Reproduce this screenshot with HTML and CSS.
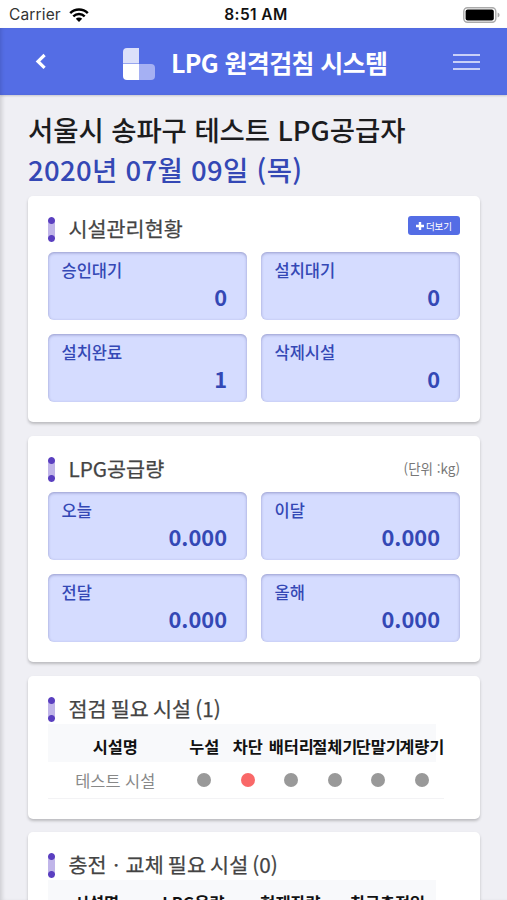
FILE: index.html
```html
<!DOCTYPE html>
<html lang="ko">
<head>
  <meta charset="UTF-8">
  <meta name="viewport" content="width=device-width, initial-scale=1.0">
  <title>LPG 원격검침 시스템</title>
  <link rel="stylesheet" href="styles.css">
</head>
<body>

  <div class="status-bar">
    <div class="carrier">
      <span>Carrier</span>
      <svg width="20" height="14" viewBox="0 0 20 14">
        <path d="M1.2 5.2a12.6 12.6 0 0 1 17.6 0" fill="none" stroke="#000" stroke-width="2.5"/>
        <path d="M4.3 8.3a8.2 8.2 0 0 1 11.4 0" fill="none" stroke="#000" stroke-width="2.4"/>
        <path d="M6.8 10.7a4.6 4.6 0 0 1 6.4 0L10 13.9z" fill="#000"/>
      </svg>
    </div>
    <div class="time">8:51 AM</div>
    <svg class="battery" width="37" height="16" viewBox="0 0 37 16">
      <rect x="0.8" y="0.8" width="32" height="14.4" rx="3.6" fill="none" stroke="#aaa" stroke-width="1.4"/>
      <rect x="2.6" y="2.6" width="28.2" height="10.8" rx="2" fill="#000"/>
      <path d="M34.6 5.5q2 .7 2 2.5t-2 2.5z" fill="#aaa"/>
    </svg>
  </div>

  <header class="header">
    <svg class="back" width="12" height="17" viewBox="0 0 12 17">
      <path d="M9.6 2L3 8.4l6.6 6.4" fill="none" stroke="#fff" stroke-width="3.2"/>
    </svg>
    <div class="brand">
      <svg width="32" height="32" viewBox="0 0 32 32">
        <path d="M4 0h12v15.5H0V4a4 4 0 0 1 4-4z" fill="#dce0fa"/>
        <path d="M0 16h16v16H4a4 4 0 0 1-4-4z" fill="#fff"/>
        <path d="M16 16h12a4 4 0 0 1 4 4v8a4 4 0 0 1-4 4H16z" fill="#a5b0f3"/>
      </svg>
      <h1>LPG 원격검침 시스템</h1>
    </div>
    <div class="menu"><span></span><span></span><span></span></div>
  </header>

  <main class="content">
    <h2 class="company">서울시 송파구 테스트 LPG공급자</h2>
    <p class="date">2020년 07월 09일 (목)</p>

    <section class="card">
      <div class="card-head">
        <i class="marker"></i>
        <h3>시설관리현황</h3>
        <a class="more">
          <svg width="8" height="8" viewBox="0 0 8 8"><path d="M4 0v8M0 4h8" stroke="#fff" stroke-width="2.4"/></svg>
          <span>더보기</span>
        </a>
      </div>
      <div class="boxes">
        <div class="box"><span>승인대기</span><strong>0</strong></div>
        <div class="box"><span>설치대기</span><strong>0</strong></div>
        <div class="box"><span>설치완료</span><strong>1</strong></div>
        <div class="box"><span>삭제시설</span><strong>0</strong></div>
      </div>
    </section>

    <section class="card">
      <div class="card-head">
        <i class="marker"></i>
        <h3>LPG공급량</h3>
        <span class="unit">(단위 :kg)</span>
      </div>
      <div class="boxes">
        <div class="box"><span>오늘</span><strong>0.000</strong></div>
        <div class="box"><span>이달</span><strong>0.000</strong></div>
        <div class="box"><span>전달</span><strong>0.000</strong></div>
        <div class="box"><span>올해</span><strong>0.000</strong></div>
      </div>
    </section>

    <section class="card table-card">
      <div class="card-head">
        <i class="marker"></i>
        <h3>점검 필요 시설 (1)</h3>
      </div>
      <div class="row check thead">
        <span>시설명</span><span>누설</span><span>차단</span><span>배터리</span><span>절체기</span><span>단말기</span><span>계량기</span>
      </div>
      <div class="row check tbody">
        <span>테스트 시설</span>
        <i class="dot"></i><i class="dot red"></i><i class="dot"></i><i class="dot"></i><i class="dot"></i><i class="dot"></i>
      </div>
    </section>

    <section class="card table-card">
      <div class="card-head">
        <i class="marker"></i>
        <h3>충전ㆍ교체 필요 시설 (0)</h3>
      </div>
      <div class="row charge thead">
        <span>시설명</span><span>LPG용량</span><span>현재잔량</span><span>최근충전일</span>
      </div>
    </section>
  </main>

</body>
</html>
```
FILE: styles.css
```css
* {
  box-sizing: border-box;
}
body {
  height: 900px;
  margin: 0;
  overflow: hidden;
  background-color: #efeff4;
  font-family: "Noto Sans CJK KR", sans-serif;
}
h1, h2, h3, p {
  margin: 0;
}
svg {
  display: block;
}
.status-bar {
  display: grid;
  grid-template-columns: 1fr auto 1fr;
  align-items: center;
  height: 28px;
  padding: 1px 7px 0 9px;
  background-color: #fff;
  font-family: Inter, sans-serif;
  font-size: 15.5px;
  color: #111;
}
.carrier {
  display: flex;
  align-items: center;
  gap: 8px;
  color: #333;
}
.carrier span {
  letter-spacing: 0.15px;
}
.time {
  padding-left: 3px;
  font-weight: 600;
  letter-spacing: 0.4px;
}
.battery {
  justify-self: end;
}
.header {
  display: flex;
  align-items: center;
  height: 67px;
  padding: 0 27px 0 35px;
  background-color: #546de5;
  box-shadow: inset 3px 0 4px -2px rgba(0, 0, 0, 0.15), 0 1px 2px rgba(0, 0, 0, 0.15);
  color: #fff;
}
.brand {
  display: flex;
  align-items: center;
  gap: 16px;
  margin: 5px auto 0 76px;
}
.brand h1 {
  margin-top: -4px;
  font-size: 25px;
  line-height: 32px;
  font-weight: 700;
  letter-spacing: -0.65px;
  white-space: nowrap;
}
.menu {
  display: flex;
  flex-direction: column;
  gap: 5px;
}
.menu span {
  width: 27px;
  height: 2px;
  background-color: #c9d0f8;
}
.content {
  height: 805px;
  padding: 14px 27px 0 28px;
  box-shadow: inset 4px 0 4px -2px rgba(0, 0, 0, 0.14);
}
.company, .date {
  font-size: 27.5px;
  line-height: 40px;
  font-weight: 500;
  white-space: nowrap;
}
.company {
  letter-spacing: -0.1px;
  color: #1c1c1e;
}
.date {
  margin-bottom: 7px;
  letter-spacing: 0.3px;
  color: #3448b5;
}
.card {
  height: 226px;
  margin-bottom: 14px;
  padding: 20px;
  background-color: #fff;
  border-radius: 5px;
  box-shadow: 0 2px 3px rgba(0, 0, 0, 0.22);
}
.card-head {
  display: flex;
  align-items: center;
  height: 26px;
  margin-bottom: 10px;
}
.marker {
  width: 7px;
  height: 25px;
  margin-right: 13.5px;
  border-radius: 4px;
  background: radial-gradient(circle at 50% 3.5px, #5a3fc0 3px, transparent 4px),
    radial-gradient(circle at 50% 21.5px, #5a3fc0 3px, transparent 4px), #c0b5e9;
}
.card h3 {
  margin-top: -2px;
  font-size: 20.7px;
  line-height: 26px;
  font-weight: 400;
  word-spacing: -1.6px;
  -webkit-text-stroke: 0.25px #444;
  color: #444;
  white-space: nowrap;
}
.more {
  display: flex;
  align-items: center;
  justify-content: center;
  gap: 2px;
  width: 52px;
  height: 19px;
  margin: -7px 0 0 auto;
  background-color: #546de5;
  border-radius: 3px;
  color: #fff;
  font-size: 9.5px;
}
.unit {
  margin: -3px 0 0 auto;
  font-size: 13.5px;
  color: #777;
}
.boxes {
  display: grid;
  grid-template-columns: 199px 199px;
  gap: 14px;
}
.box {
  display: flex;
  flex-direction: column;
  height: 68px;
  padding: 6px 20px 0 13.5px;
  background-color: #d5dcff;
  border-radius: 6px;
  box-shadow: inset 0 1px 3px rgba(50, 50, 120, 0.38);
  color: #3448b5;
}
.box span {
  font-size: 16.5px;
  line-height: 24px;
  font-weight: 500;
}
.box strong {
  align-self: flex-end;
  font-size: 21.8px;
  line-height: 29px;
  font-weight: 700;
}
.table-card {
  height: 143px;
  margin-bottom: 13px;
}
.table-card .card-head {
  margin-bottom: 2px;
}
.row {
  display: grid;
  align-items: center;
  justify-items: center;
  font-size: 16.4px;
  white-space: nowrap;
}
.row span {
  display: flex;
  justify-content: center;
  width: 0;
}
.check {
  width: 396px;
  grid-template-columns: 134.5px repeat(6, 43.5px);
}
.charge {
  grid-template-columns: repeat(4, 97px);
}
.thead {
  width: 388px;
  height: 38px;
  padding-top: 6px;
  background-color: #f8f9fb;
  font-weight: 700;
  color: #111;
}
.tbody {
  height: 37px;
  border-bottom: 1px solid #f3f3f5;
  color: #888;
}
.dot {
  width: 14px;
  height: 14px;
  border-radius: 50%;
  background-color: #999;
}
.dot.red {
  background-color: #f96868;
}
```
